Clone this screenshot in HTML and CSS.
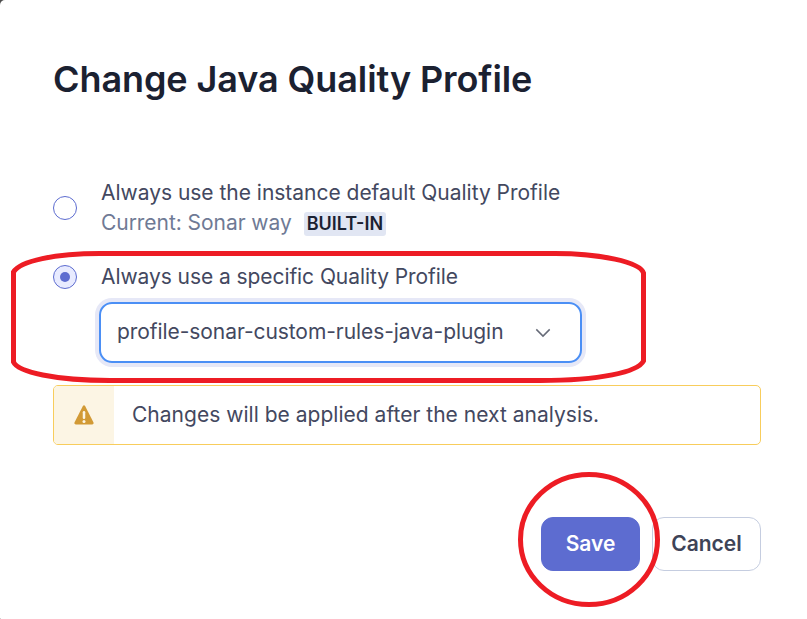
FILE: index.html
```html
<!DOCTYPE html>
<html lang="en">
<head>
<meta charset="utf-8">
<title>Change Java Quality Profile</title>
<link rel="stylesheet" href="styles.css">
</head>
<body>
<div class="backdrop">
  <main class="modal">
    <h1 class="title"><span>Change Java Quality Profile</span></h1>
    <form class="form">
      <div class="option">
        <span class="radio"></span>
        <div class="option-text">
          <div class="line l-default">Always use the instance default Quality Profile</div>
          <div class="line muted"><span class="l-current">Current: Sonar way</span><span class="badge">BUILT-IN</span></div>
        </div>
      </div>
      <div class="option specific">
        <span class="radio checked"></span>
        <div class="line l-specific">Always use a specific Quality Profile</div>
      </div>
      <div class="select">
        <span class="l-select">profile-sonar-custom-rules-java-plugin</span>
        <svg class="chevron" width="16" height="10" viewBox="0 0 16 10"><path d="M1.3 1.4 8 8.1l6.700-6.700" fill="none" stroke="#666b78" stroke-width="1.5"/></svg>
      </div>
      <div class="alert">
        <div class="alert-icon">
          <svg width="20" height="20" viewBox="0 0 20 20"><path d="M8.900 1.100Q10-.6 11.100 1.100L19.400 17.200Q20.200 19.300 18.200 19.500H1.800Q-.2 19.300.6 17.200Z" fill="#d29a35"/><path d="M10 7.300v5.500" stroke="#fcf5e4" stroke-width="2.500" stroke-linecap="round"/><circle cx="10" cy="16.600" r="1.500" fill="#fcf5e4"/></svg>
        </div>
        <div class="alert-text"><span class="l-alert">Changes will be applied after the next analysis.</span></div>
      </div>
    </form>
    <footer class="actions">
      <button class="button primary">Save</button>
      <button class="button">Cancel</button>
    </footer>
  </main>
  <svg class="marks" width="807" height="619" viewBox="0 0 807 619" fill="none" stroke="#ed1c24" stroke-width="5">
    <path d="M13.500 272C20 261 55 253.500 100 253.500H555C600 253.500 640 262 643.500 273V361C638 372 600 380.500 540 380.500H110C55 380.500 18 372 13.500 362Z"/>
    <ellipse cx="589" cy="539.500" rx="68.500" ry="65"/>
  </svg>
</div>
</body>
</html>
```
FILE: styles.css
```css
* { box-sizing: border-box; }
body {
  margin: 0;
  font-family: Inter, "Liberation Sans", sans-serif;
  font-size: 21px;
  font-weight: 400;
  line-height: 30px;
  color: #434860;
  background: #4d4d4d;
}
.backdrop { position: relative; width: 807px; height: 619px; overflow: hidden; }
.modal {
  height: 619px;
  padding: 55px 46px 0 53px;
  background: #fff;
  border-radius: 5px 0 0 1px;
}
.title {
  margin: 0;
  font-size: 36px;
  line-height: 48px;
  font-weight: 600;
  letter-spacing: -0.09px;
  color: #1b2131;
  white-space: nowrap;
}
.form { margin-top: 75px; }
.option { display: flex; align-items: center; gap: 24px; white-space: nowrap; }
.specific { margin-top: 24px; }
.l-default { letter-spacing: -0.02px; }
.l-current { letter-spacing: -0.05px; }
.l-specific { letter-spacing: -0.07px; }
.l-alert { letter-spacing: 0.02px; }
.radio {
  display: flex;
  align-items: center;
  justify-content: center;
  flex: none;
  width: 24px;
  height: 24px;
  border: 1px solid #5d6cd0;
  border-radius: 50%;
}
.checked { background: #e8ebff; }
.checked::after { content: ""; width: 10px; height: 10px; border-radius: 50%; background: #5d6cd0; }
.muted { display: flex; align-items: center; color: #6f7a95; }
.badge {
  margin: 2px 0 0 12px;
  padding: 0 3px;
  height: 24px;
  line-height: 24px;
  font-size: 18px;
  font-weight: 600;
  color: #1b2131;
  background: #e1e6f3;
  border-radius: 3px;
}
.select {
  display: flex;
  align-items: center;
  justify-content: space-between;
  width: 483px;
  height: 61px;
  margin: 10px 0 0 46px;
  padding: 0 29px 0 16px;
  border: 2px solid #4b8ff5;
  border-radius: 13px;
  box-shadow: 0 0 0 4px #e6e8f7;
  white-space: nowrap;
}
.l-select { padding-bottom: 2px; letter-spacing: -0.07px; }
.alert {
  display: flex;
  height: 60px;
  margin-top: 22px;
  border: 1px solid #f8cd5c;
  border-radius: 5px;
  overflow: hidden;
}
.alert-icon { display: flex; align-items: center; justify-content: center; width: 60px; background: #fcf5e4; }
.alert-text { display: flex; align-items: center; padding-left: 18px; white-space: nowrap; }
.actions { display: flex; justify-content: flex-end; gap: 12px; margin-top: 72px; }
.button {
  width: 109px;
  height: 54px;
  padding: 0;
  border: 1px solid #c5cde0;
  border-radius: 12px;
  background: #fff;
  font: 600 21px/30px Inter, "Liberation Sans", sans-serif;
  color: #3e4357;
}
.primary { width: 99px; border-color: #5d6cd0; background: #5d6cd0; color: #fff; }
.marks { position: absolute; left: 0; top: 0; }
```
